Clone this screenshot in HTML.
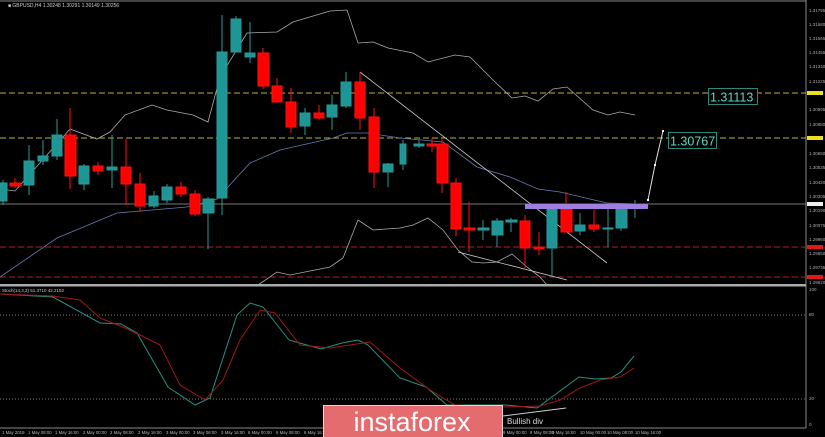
<!DOCTYPE html>
<html><head><meta charset="utf-8"><style>
html,body{margin:0;padding:0;background:#000;width:825px;height:437px;overflow:hidden}
svg{display:block;font-family:"Liberation Sans",sans-serif}
</style></head><body>
<svg width="825" height="437" viewBox="0 0 825 437">
<rect width="825" height="437" fill="#000"/>
<line x1="0" y1="1" x2="806" y2="1" stroke="#888" stroke-width="1"/>
<line x1="806" y1="0" x2="806" y2="428" stroke="#888" stroke-width="1"/>
<rect x="0" y="284" width="806" height="2.5" fill="#aaa"/>
<line x1="0" y1="428" x2="806" y2="428" stroke="#888"/>
<text x="8" y="7" font-size="5" fill="#ccc">■ GBPUSD,H4  1.30248 1.30291 1.30149 1.30256</text>
<line x1="0" y1="93" x2="806" y2="93" stroke="#b8b040" stroke-dasharray="6,3"/>
<line x1="0" y1="138" x2="806" y2="138" stroke="#b8b040" stroke-dasharray="6,3"/>
<line x1="0" y1="204" x2="806" y2="204" stroke="#777"/>
<line x1="0" y1="247" x2="806" y2="247" stroke="#b02020" stroke-dasharray="6,3"/>
<line x1="0" y1="277" x2="806" y2="277" stroke="#b02020" stroke-dasharray="6,3"/>
<g fill="none" stroke-width="0.8">
<polyline stroke="#aaa" points="0,189 15,191 70,129 97,139 110,132 125,115 152,105 167,110 193,115 208,122 220,77 247,33 277,32 293,22 330,11 347,10 358,43 373,42 388,48 413,53 428,62 455,55 470,57 493,80 512,98 525,96 538,101 553,89 567,87 593,110 608,115 620,112 635,115"/>
<polyline stroke="#6a78b0" points="0,277 57,238 117,213 187,207 217,199 250,163 280,150 333,138 347,133 367,133 400,138 443,142 477,167 510,177 538,189 560,192 607,203 640,204"/>
<polyline stroke="#aaa" points="258,285 277,272 290,275 330,267 343,258 358,220 373,230 400,228 413,225 428,218 443,230 458,250 472,262 483,263 497,262 512,254 527,267 540,277 547,285"/>
<line x1="360" y1="72" x2="607" y2="263" stroke="#ccc"/>
<line x1="458" y1="252" x2="567" y2="280" stroke="#ccc"/>
</g>
<g stroke-width="1">
<g stroke="#2a9a9a" fill="#1e9696">
<line x1="3" y1="180" x2="3" y2="205"/><rect x="0" y="183" width="7" height="18"/>
<line x1="29" y1="145" x2="29" y2="195"/><rect x="24" y="161" width="10" height="24"/>
<line x1="43" y1="140" x2="43" y2="165"/><rect x="38" y="156" width="10" height="5"/>
<line x1="57" y1="119" x2="57" y2="160"/><rect x="52" y="135" width="10" height="21"/>
<line x1="84" y1="164" x2="84" y2="190"/><rect x="79" y="166" width="10" height="18"/>
<line x1="112" y1="135" x2="112" y2="188"/><rect x="107" y="167" width="10" height="3"/>
<line x1="154" y1="191" x2="154" y2="208"/><rect x="149" y="196" width="9" height="10"/>
<line x1="167" y1="184" x2="167" y2="203"/><rect x="162" y="187" width="10" height="13"/>
<line x1="208" y1="197" x2="208" y2="249"/><rect x="203" y="199" width="11" height="14"/>
<line x1="222" y1="15" x2="222" y2="215"/><rect x="217" y="52" width="10" height="146"/>
<line x1="236" y1="16" x2="236" y2="52"/><rect x="231" y="19" width="10" height="33"/>
<line x1="250" y1="22" x2="250" y2="63"/><rect x="245" y="53" width="10" height="4"/>
<line x1="305" y1="108" x2="305" y2="135"/><rect x="300" y="113" width="10" height="13"/>
<line x1="332" y1="95" x2="332" y2="130"/><rect x="327" y="105" width="10" height="12"/>
<line x1="346" y1="72" x2="346" y2="108"/><rect x="341" y="82" width="10" height="24"/>
<line x1="388" y1="163" x2="388" y2="187"/><rect x="383" y="164" width="10" height="8"/>
<line x1="403" y1="140" x2="403" y2="170"/><rect x="400" y="144" width="6" height="20"/>
<line x1="419" y1="140" x2="419" y2="148"/><rect x="414" y="144" width="10" height="2"/>
<line x1="483" y1="220" x2="483" y2="240"/><rect x="478" y="228" width="11" height="2"/>
<line x1="497" y1="218" x2="497" y2="247"/><rect x="492" y="221" width="11" height="14"/>
<line x1="511" y1="218" x2="511" y2="232"/><rect x="506" y="220" width="11" height="2"/>
<line x1="552" y1="209" x2="552" y2="276"/><rect x="547" y="209" width="10" height="39"/>
<line x1="580" y1="213" x2="580" y2="235"/><rect x="575" y="225" width="10" height="6"/>
<line x1="608" y1="204" x2="608" y2="247"/><rect x="603" y="228" width="10" height="1"/>
<line x1="621" y1="203" x2="621" y2="231"/><rect x="616" y="205" width="11" height="23"/>
<line x1="635" y1="200" x2="635" y2="218"/><rect x="630" y="204" width="10" height="2"/>
</g>
<g stroke="#ff1010" fill="#ff0000">
<line x1="15" y1="178" x2="15" y2="188"/><rect x="10" y="183" width="11" height="3"/>
<line x1="70" y1="108" x2="70" y2="189"/><rect x="65" y="135" width="11" height="41"/>
<line x1="98" y1="162" x2="98" y2="175"/><rect x="93" y="166" width="10" height="5"/>
<line x1="126" y1="139" x2="126" y2="205"/><rect x="121" y="167" width="10" height="17"/>
<line x1="140" y1="173" x2="140" y2="212"/><rect x="135" y="184" width="10" height="22"/>
<line x1="181" y1="182" x2="181" y2="197"/><rect x="176" y="187" width="10" height="7"/>
<line x1="195" y1="190" x2="195" y2="216"/><rect x="190" y="194" width="10" height="20"/>
<line x1="263" y1="48" x2="263" y2="89"/><rect x="258" y="53" width="11" height="33"/>
<line x1="277" y1="78" x2="277" y2="102"/><rect x="272" y="86" width="10" height="16"/>
<line x1="291" y1="88" x2="291" y2="133"/><rect x="286" y="102" width="10" height="25"/>
<line x1="319" y1="105" x2="319" y2="120"/><rect x="314" y="113" width="10" height="5"/>
<line x1="360" y1="72" x2="360" y2="130"/><rect x="355" y="82" width="10" height="36"/>
<line x1="374" y1="108" x2="374" y2="188"/><rect x="369" y="117" width="10" height="55"/>
<line x1="432" y1="138" x2="432" y2="152"/><rect x="427" y="144" width="10" height="2"/>
<line x1="442" y1="139" x2="442" y2="193"/><rect x="437" y="144" width="11" height="39"/>
<line x1="456" y1="178" x2="456" y2="236"/><rect x="451" y="183" width="10" height="46"/>
<line x1="469" y1="202" x2="469" y2="252"/><rect x="464" y="228" width="11" height="2"/>
<line x1="525" y1="215" x2="525" y2="268"/><rect x="520" y="221" width="10" height="27"/>
<line x1="539" y1="232" x2="539" y2="255"/><rect x="534" y="247" width="10" height="2"/>
<line x1="566" y1="192" x2="566" y2="232"/><rect x="561" y="209" width="11" height="23"/>
<line x1="594" y1="210" x2="594" y2="232"/><rect x="589" y="225" width="10" height="4"/>
</g>
</g>
<rect x="525" y="204" width="123" height="5" fill="#a07ee0"/>
<polyline points="648,200 655,165 663,131" fill="none" stroke="#ddd"/>
<rect x="647" y="199" width="2" height="2" fill="#fff"/><rect x="654" y="164" width="2" height="2" fill="#fff"/><rect x="662" y="130" width="2" height="2" fill="#fff"/>
<rect x="708.5" y="88.5" width="49" height="16" fill="#000" stroke="#2a8a80"/>
<text x="710" y="101.5" font-size="12.5" fill="#5fd8c8">1.31113</text>
<rect x="668.5" y="132.5" width="48" height="16" fill="#000" stroke="#2a8a80"/>
<text x="670" y="145.5" font-size="12.5" fill="#5fd8c8">1.30767</text>
<g font-size="4.5" fill="#aaa">
<text x="809" y="12">1.31795</text><text x="809" y="26">1.31680</text><text x="809" y="40">1.31565</text><text x="809" y="54">1.31455</text><text x="809" y="68">1.31340</text><text x="809" y="83">1.31225</text><text x="809" y="111">1.30995</text><text x="809" y="126">1.30880</text><text x="809" y="155">1.30650</text><text x="809" y="169">1.30535</text><text x="809" y="184">1.30420</text><text x="809" y="198">1.30305</text><text x="809" y="212">1.30190</text><text x="809" y="227">1.30075</text><text x="809" y="241">1.29960</text><text x="809" y="255">1.29850</text><text x="809" y="269">1.29735</text><text x="809" y="284">1.29620</text>
<text x="809" y="291">100</text><text x="809" y="316">80</text><text x="809" y="400">20</text><text x="809" y="426">0</text>
</g>
<rect x="807" y="91" width="16" height="4" fill="#e8e020"/>
<rect x="807" y="136" width="16" height="4" fill="#e8e020"/>
<rect x="807" y="202" width="16" height="4" fill="#eee"/>
<rect x="807" y="245" width="16" height="4" fill="#e01818"/>
<rect x="807" y="275" width="16" height="4" fill="#e01818"/>
<text x="2" y="292" font-size="4.5" fill="#ccc">Stoch(14,3,3) 51.3710 42.2152</text>
<line x1="0" y1="315" x2="806" y2="315" stroke="#777" stroke-dasharray="1,2"/>
<line x1="0" y1="399" x2="806" y2="399" stroke="#777" stroke-dasharray="1,2"/>
<g fill="none" stroke-width="1">
<polyline stroke="#2a8f80" points="0,294 53,297 100,323 121,324 137,333 168,387 195,405 210,398 237,315 250,303 263,307 289,340 321,349 342,343 358,340 368,345 400,378 426,387 447,405 505,405 537,408 579,377 595,379 611,378 621,372 634,356"/>
<polyline stroke="#a01818" points="0,294 53,296 80,300 100,318 125,328 140,335 160,345 180,385 205,400 223,380 240,340 260,310 275,313 300,345 330,348 370,342 400,368 430,390 455,405 505,407 540,406 560,400 580,388 600,380 620,377 634,368"/>
<line x1="503" y1="416" x2="566" y2="408" stroke="#ccc"/>
</g>
<text x="507" y="424" font-size="8" fill="#ddd">Bullish div</text>
<g font-size="4.3" fill="#bbb">
<text x="2" y="434">1 May 2019</text><text x="28" y="434">1 May 08:00</text><text x="55" y="434">1 May 16:00</text><text x="83" y="434">2 May 00:00</text><text x="110" y="434">2 May 08:00</text><text x="138" y="434">2 May 16:00</text><text x="166" y="434">3 May 00:00</text><text x="193" y="434">3 May 08:00</text><text x="221" y="434">3 May 16:00</text><text x="248" y="434">6 May 00:00</text><text x="276" y="434">6 May 08:00</text><text x="304" y="434">6 May 16:00</text><text x="503" y="434">9 May 00:00</text><text x="530" y="434">9 May 08:00</text><text x="552" y="434">9 May 16:00</text><text x="580" y="434">10 May 00:00</text><text x="607" y="434">10 May 08:00</text><text x="635" y="434">10 May 16:00</text>
</g>
<rect x="323.5" y="405.5" width="179" height="33" fill="#e46c6f" stroke="#f4d0d0"/>
<text x="412" y="431" font-size="27" fill="#fff" text-anchor="middle">instaforex</text>
</svg>
</body></html>
